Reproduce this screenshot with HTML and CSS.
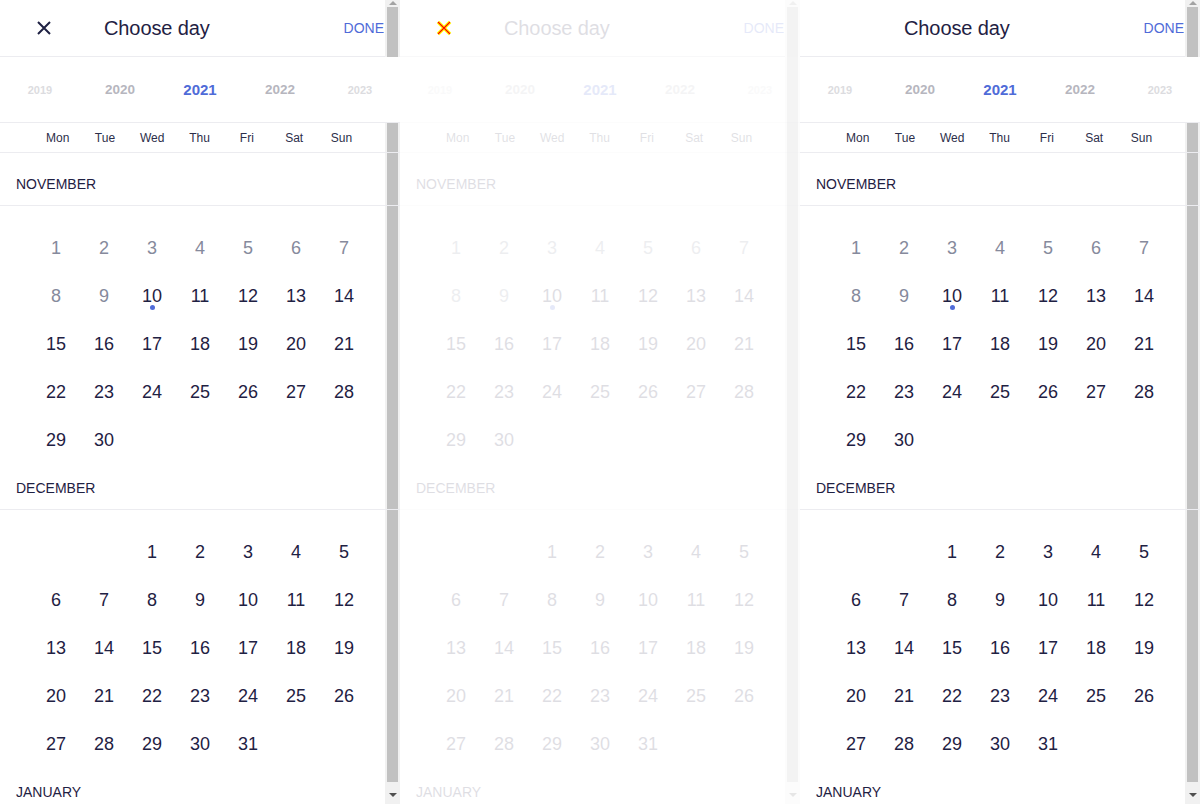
FILE: index.html
```html
<!DOCTYPE html>
<html lang="en">

<head>
  <meta charset="UTF-8">
  <meta name="viewport" content="width=device-width, initial-scale=1">
  <title>Choose day</title>
  <link rel="stylesheet" href="styles.css">
</head>

<body>

  <div class="panel">
    <div class="header">
      <span class="icon">
        <svg width="16" height="16" viewBox="0 0 16 16"><path d="M2 2 L14 14 M14 2 L2 14" stroke="#1f2143" stroke-width="2" fill="none"/></svg>
      </span>
      <span class="title">Choose day</span>
      <span class="done">DONE</span>
    </div>
    <div class="years">
      <span class="far">2019</span><span class="near">2020</span><span class="current">2021</span><span class="near">2022</span><span class="far">2023</span>
    </div>
    <div class="weekdays">
      <span>Mon</span><span>Tue</span><span>Wed</span><span>Thu</span><span>Fri</span><span>Sat</span><span>Sun</span>
    </div>
    <div class="months"></div>
  </div>

  <div class="panel faded">
    <div class="header">
      <span class="icon">
        <svg width="16" height="16" viewBox="0 0 16 16">
          <path d="M2 2 L14 14 M14 2 L2 14" stroke="#ffff00" stroke-width="3.5" fill="none"/>
          <path d="M2 2 L14 14 M14 2 L2 14" stroke="#ff0000" stroke-width="1.2" fill="none"/>
        </svg>
      </span>
      <span class="title">Choose day</span>
      <span class="done">DONE</span>
    </div>
    <div class="years">
      <span class="far">2019</span><span class="near">2020</span><span class="current">2021</span><span class="near">2022</span><span class="far">2023</span>
    </div>
    <div class="weekdays">
      <span>Mon</span><span>Tue</span><span>Wed</span><span>Thu</span><span>Fri</span><span>Sat</span><span>Sun</span>
    </div>
    <div class="months"></div>
  </div>

  <div class="panel">
    <div class="header">
      <span class="icon"></span>
      <span class="title">Choose day</span>
      <span class="done">DONE</span>
    </div>
    <div class="years">
      <span class="far">2019</span><span class="near">2020</span><span class="current">2021</span><span class="near">2022</span><span class="far">2023</span>
    </div>
    <div class="weekdays">
      <span>Mon</span><span>Tue</span><span>Wed</span><span>Thu</span><span>Fri</span><span>Sat</span><span>Sun</span>
    </div>
    <div class="months"></div>
  </div>

  <script>
    // January is only peeking in at the bottom, so no day grid for it
    const months = [
      { name: 'November', start: 0, days: 30, past: 9, today: 10 },
      { name: 'December', start: 2, days: 31 },
      { name: 'January', start: 5, days: 0 }
    ];

    function renderMonths(el) {
      months.forEach(m => {
        const title = document.createElement('div');
        title.className = 'month-name';
        title.textContent = m.name;
        el.appendChild(title);
        if (!m.days) return;

        const grid = document.createElement('div');
        grid.className = 'days';
        for (let i = 0; i < m.start; i++) {
          grid.appendChild(document.createElement('span'));
        }
        for (let d = 1; d <= m.days; d++) {
          const day = document.createElement('span');
          day.className = 'day';
          if (m.past && d <= m.past) day.className += ' past';
          if (d === m.today) day.className += ' today';
          day.textContent = d;
          grid.appendChild(day);
        }
        el.appendChild(grid);
      });
    }

    document.querySelectorAll('.months').forEach(renderMonths);
  </script>
</body>

</html>
```

FILE: styles.css
```css
* {
  box-sizing: border-box;
  margin: 0;
  padding: 0;
}

body {
  font-family: "Liberation Sans", Arial, sans-serif;
  color: #1f2143;
  background: #fff;
  display: flex;
}

/* each picker is a 400px frame with its own scrollbar */
.panel {
  width: 400px;
  height: 804px;
  overflow: hidden;
  position: relative;
  background:
    linear-gradient(#c1c1c1, #c1c1c1) 387px 7px / 11px 775px no-repeat,
    linear-gradient(#f1f1f1, #f1f1f1) 385px 0 / 15px 804px no-repeat,
    #fff;
}

.panel::before,
.panel::after {
  content: "";
  position: absolute;
  left: 389px;
  border-left: 4px solid transparent;
  border-right: 4px solid transparent;
}

.panel::before {
  top: 1px;
  border-bottom: 4px solid #a3a3a3;
}

.panel::after {
  top: 793px;
  border-top: 4px solid #505050;
}

.header {
  width: 385px;
  height: 57px;
  border-bottom: 1px solid #ececf0;
  background: #fff;
  display: flex;
  align-items: center;
}

.icon {
  width: 88px;
  height: 16px;
  display: flex;
  justify-content: center;
}

.title {
  flex: 1;
  margin-left: 16px;
  font-size: 20px;
  letter-spacing: -0.1px;
}

.done {
  margin-right: 1px;
  font-size: 14px;
  color: #4f6bd8;
}

.years {
  height: 66px;
  background: #fff;
  border-bottom: 1px solid #ececf0;
  display: grid;
  grid-template-columns: repeat(5, 80px);
  align-items: center;
  justify-items: center;
  font-weight: bold;
}

.years .far {
  font-size: 11px;
  color: #dcdce0;
}

.years .near {
  font-size: 13.5px;
  color: #b6b6be;
}

.years .current {
  font-size: 15px;
  color: #4f6bd8;
}

.weekdays {
  height: 30px;
  padding-left: 34px;
  border-bottom: 1px solid #ececf0;
  display: grid;
  grid-template-columns: repeat(7, 47.3px);
  align-items: center;
  justify-items: center;
  font-size: 12px;
  color: #2c2e4a;
}

.months {
  padding-top: 7px;
}

.month-name {
  padding: 16px 16px 13px;
  line-height: 16px;
  font-size: 14px;
  text-transform: uppercase;
  border-bottom: 1px solid #ececf0;
}

.days {
  display: grid;
  grid-template-columns: repeat(7, 48px);
  grid-auto-rows: 48px;
  padding: 18px 0 0 32px;
}

.day {
  position: relative;
  display: flex;
  align-items: center;
  justify-content: center;
  font-size: 18px;
}

.day.past {
  color: #868a9c;
}

.day.today::after {
  content: "";
  position: absolute;
  left: 50%;
  bottom: 10px;
  width: 5px;
  height: 5px;
  margin-left: -2.5px;
  border-radius: 50%;
  background: #4f6bd8;
}

/* middle frame: everything washed out except the marker icon */
.panel.faded {
  background:
    linear-gradient(#f3f3f3, #f3f3f3) 387px 7px / 11px 775px no-repeat,
    linear-gradient(#fcfcfc, #fcfcfc) 385px 0 / 15px 804px no-repeat,
    #fff;
}

.panel.faded::before {
  border-bottom-color: #f0f0f0;
}

.panel.faded::after {
  border-top-color: #e6e6e6;
}

.panel.faded .header {
  border-bottom-color: #f8f8f9;
}

.panel.faded .title,
.panel.faded .done,
.panel.faded .years,
.panel.faded .weekdays,
.panel.faded .months {
  opacity: 0.14;
}
```
